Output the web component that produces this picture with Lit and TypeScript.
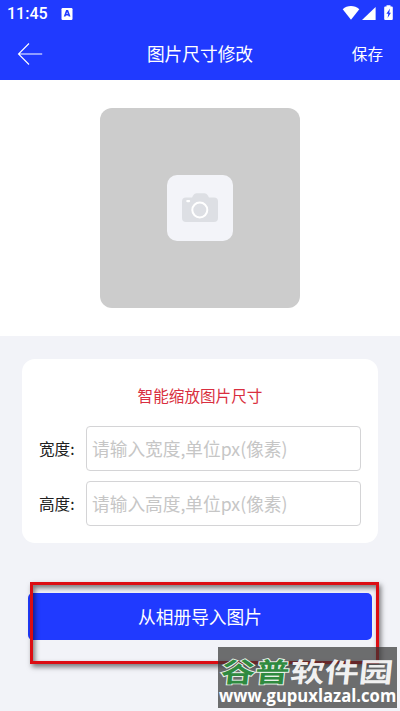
import { LitElement, html, css } from "lit";
import { customElement, property } from "lit/decorators.js";

@customElement("status-bar")
class StatusBar extends LitElement {
  static styles = css`
    :host { display: flex; height: 28px; color: #fff; }
    .time { font: 500 16px/28px Roboto, sans-serif; margin-left: 7px; width: 54px; }
    svg { display: block; fill: #fff; }
    .signals { margin-left: auto; }
    .mark { fill: #203aff; }
  `;
  render() {
    return html`
      <span class="time">11:45</span>
      <svg width="14" height="28" viewBox="0 0 14 28">
        <rect x="0.5" y="8" width="11" height="12" rx="1.2" />
        <path class="mark" fill-rule="evenodd" d="M5.100 10h2l2.400 6.600H7.700l-.4-1.200H4.900l-.4 1.200H2.800zM5.400 14h1.400l-.7-2.100z" />
      </svg>
      <svg class="signals" width="60" height="28" viewBox="0 0 60 28">
        <path d="M2.700 9.200C7.200 5 14.600 5 19.300 9.200L11 19.800z" />
        <path d="M35.600 7v12.900H22z" />
        <path fill-rule="evenodd" d="M46.500 5.200h4v1.300h1.300q1 0 1 1v11.500q0 1-1 1h-6.600q-1 0-1-1V7.500q0-1 1-1h1.300zM50 8.500l-3.600 5.300h1.900l-.7 4.200 3.300-5.300h-1.700z" />
      </svg>
    `;
  }
}

@customElement("nav-bar")
class NavBar extends LitElement {
  static styles = css`
    :host { display: grid; grid-template-columns: 100px 1fr 100px; align-items: center; height: 51px; color: #fff; }
    .title { text-align: center; font-size: 17.7px; line-height: 26px; padding-bottom: 1px; }
    .save { text-align: right; padding: 0 17px 1px 0; font-size: 15.6px; line-height: 24px; }
    svg { display: block; margin-left: 17px; fill: none; stroke: #fff; stroke-width: 1.1; }
  `;
  render() {
    return html`
      <svg width="27" height="24" viewBox="0 0 27 24"><path d="M25.200 12H1.500M12 1.500 1.500 12 12 22.500" /></svg>
      <span class="title">图片尺寸修改</span>
      <span class="save">保存</span>
    `;
  }
}

@customElement("size-field")
class SizeField extends LitElement {
  @property() label = "";
  @property() hint = "";
  static styles = css`
    :host { display: flex; align-items: center; height: 45px; }
    .label { width: 47px; font-size: 15.6px; line-height: 24px; padding-bottom: 1px; color: #202020; white-space: nowrap; }
    .box { flex: 1; box-sizing: border-box; height: 45px; border: 1px solid #d4d4d6; border-radius: 4px;
      padding-left: 5px; font-size: 17.7px; line-height: 43px; color: #c6c6c6; background: #fff; white-space: nowrap; }
  `;
  render() {
    return html`<span class="label">${this.label}</span><div class="box">${this.hint}</div>`;
  }
}

@customElement("site-badge")
class SiteBadge extends LitElement {
  static styles = css`
    svg { display: block; }
    .plate { fill: #333; fill-opacity: .7; }
    .name { font: 700 29px "Noto Sans CJK SC", sans-serif; }
    .green { fill: #2f8a3f; stroke: #e6f0e7; stroke-width: 2; paint-order: stroke; }
    .white { fill: #fff; fill-opacity: .93; }
    .url { font: 700 18px "Open Sans", sans-serif; fill: #fff; }
  `;
  render() {
    return html`
      <svg width="179" height="61" viewBox="0 0 179 61">
        <rect class="plate" width="179" height="61" />
        <g class="name" transform="translate(2 35) skewX(-6) scale(1.180 .93)">
          <text class="green">谷普</text>
          <text class="white" x="59">软件园</text>
        </g>
        <text class="url" transform="translate(1 54.500) scale(.925 1)">www.gupuxlazal.com</text>
      </svg>
    `;
  }
}

@customElement("app-root")
class AppRoot extends LitElement {
  static styles = css`
    :host { display: block; position: relative; width: 400px; height: 711px; overflow: hidden;
      background: #f2f3f8; font-family: "Noto Sans CJK SC", sans-serif; }
    header { height: 80px; background: #203aff; }
    .preview { height: 256px; box-sizing: border-box; padding-top: 28px; background: #fff; }
    .photo { width: 200px; height: 200px; margin: 0 auto; border-radius: 12px; background: #ccc;
      display: flex; align-items: center; justify-content: center; }
    .tile { width: 66px; height: 66px; border-radius: 10px; background: #f3f4f9; }
    .tile svg { display: block; }
    .card { box-sizing: border-box; height: 184px; margin: 23px 22px 0; padding: 24px 17px 0 17px;
      border-radius: 13px; background: #fff; }
    .caption { height: 24px; line-height: 24px; margin-bottom: 19px; text-align: center; font-size: 15.6px; color: #d92f40; }
    .fields { display: grid; gap: 10px; }
    .import { height: 47px; margin: 50px 28px 0; border-radius: 5px; background: #203aff; color: #fff;
      text-align: center; font-size: 17.7px; line-height: 47px; }
    .highlight { position: absolute; left: 30px; top: 582px; width: 349px; height: 82px; box-sizing: border-box;
      border: 3px solid #dc0d13; box-shadow: 2px 3px 5px rgba(0,0,0,.5), inset 2px 3px 5px rgba(0,0,0,.5); }
    site-badge { position: absolute; left: 218px; top: 647px; }
  `;
  render() {
    return html`
      <header><status-bar></status-bar><nav-bar></nav-bar></header>
      <section class="preview">
        <div class="photo">
          <div class="tile">
            <svg width="66" height="66" viewBox="0 0 66 66">
              <path fill="#dddfe4" d="M19 22.500h6l1.500-2.500q1-1.800 3-1.800h8q2 0 3 1.800l1.500 2.500h5q4 0 4 4v16.500q0 4-4 4H19q-4 0-4-4V26.500q0-4 4-4z" />
              <circle cx="32.800" cy="35" r="7.500" fill="none" stroke="#fff" stroke-width="2" />
              <rect x="19.200" y="25" width="4" height="2.200" rx="1.100" fill="#fff" />
            </svg>
          </div>
        </div>
      </section>
      <section class="card">
        <div class="caption">智能缩放图片尺寸</div>
        <div class="fields">
          <size-field label="宽度:" hint="请输入宽度,单位px(像素)"></size-field>
          <size-field label="高度:" hint="请输入高度,单位px(像素)"></size-field>
        </div>
      </section>
      <div class="import">从相册导入图片</div>
      <div class="highlight"></div>
      <site-badge></site-badge>
    `;
  }
}
